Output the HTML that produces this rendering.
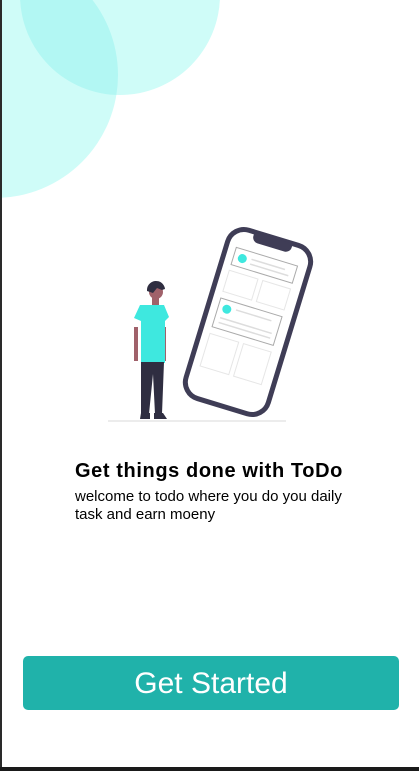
<!DOCTYPE html>
<html><head><style>
body{margin:0;width:419px;height:771px;overflow:hidden;background:#fff;position:relative;font-family:"Liberation Sans",Roboto,sans-serif}
.edge{position:absolute;left:0;top:0;width:2px;height:771px;background:#2a2a2a}
.bot{position:absolute;left:0;top:767px;width:419px;height:4px;background:#1a1a1a}
h1{position:absolute;left:75px;top:460px;margin:0;font-size:20px;letter-spacing:0.6px;font-weight:bold;color:#000}
p{position:absolute;left:75px;top:488px;margin:0;font-size:15px;line-height:18px;color:#000}
.btn{position:absolute;left:23px;top:656px;width:376px;height:54px;background:#20b2aa;border-radius:5px;color:#fff;font-size:30px;text-align:center;line-height:56px}
</style></head><body>
<svg width="419" height="771" style="position:absolute;left:0;top:0">
<circle cx="120" cy="-5" r="100" fill="#cffcf8"/>
<circle cx="-5" cy="75" r="123" fill="#cffcf8"/>
<clipPath id="c"><circle cx="120" cy="-5" r="100"/></clipPath>
<circle cx="-5" cy="75" r="123" fill="#b2f7f3" clip-path="url(#c)"/>
<line x1="108" y1="421" x2="286" y2="421" stroke="#e6e6e6" stroke-width="1.5"/>
<g transform="translate(248,322) rotate(17)">
<rect x="-43" y="-88" width="86" height="176" rx="17" fill="#fff" stroke="#3f3d56" stroke-width="5"/>
<path d="M-20,-88 h40 v4 a6,6 0 0 1 -6,6 h-28 a6,6 0 0 1 -6,-6z" fill="#3f3d56"/>
<rect x="-33" y="-68" width="64" height="18" fill="none" stroke="#aaa" stroke-width="1"/>
<circle cx="-24" cy="-59" r="4.5" fill="#3ee8df"/>
<line x1="-15" y1="-61" x2="20" y2="-61" stroke="#ddd" stroke-width="1.5"/>
<line x1="-15" y1="-56" x2="25" y2="-56" stroke="#ddd" stroke-width="1.5"/>
<rect x="-33" y="-44" width="30" height="22" fill="none" stroke="#e6e6e6"/>
<rect x="2" y="-44" width="29" height="22" fill="none" stroke="#e6e6e6"/>
<rect x="-33" y="-15" width="64" height="30" fill="none" stroke="#aaa" stroke-width="1"/>
<circle cx="-24" cy="-6" r="4.5" fill="#3ee8df"/>
<line x1="-15" y1="-8" x2="22" y2="-8" stroke="#ddd" stroke-width="1.5"/>
<line x1="-28" y1="4" x2="26" y2="4" stroke="#ddd" stroke-width="1.5"/>
<line x1="-28" y1="9" x2="26" y2="9" stroke="#ddd" stroke-width="1.5"/>
<rect x="-33" y="22" width="30" height="34" fill="none" stroke="#e6e6e6"/>
<rect x="2" y="22" width="29" height="34" fill="none" stroke="#e6e6e6"/>
</g>
<circle cx="156" cy="292" r="7" fill="#a0616a"/>
<path d="M147,291 a9,9 0 0 1 18,-2 l-3,1 l-5,-2 l-4,5z" fill="#2f2e41"/>
<rect x="152" y="297" width="7" height="8" fill="#a0616a"/>
<rect x="134" y="327" width="4" height="34" fill="#a0616a"/>
<rect x="162" y="327" width="4" height="34" fill="#a0616a"/>
<path d="M140,305 h24 l5,12 -4,4 v42 h-24 v-42 l-7,-3 z" fill="#3ee8df"/>
<path d="M141,362 h23 l-2,52 h-7 l-2,-40 -4,40 h-8z" fill="#2f2e41"/>
<path d="M141,413 h9 v6 h-10z M154,413 h9 l4,6 h-13z" fill="#2f2e41"/>
</svg>
<h1>Get things done with ToDo</h1>
<p>welcome to todo where you do you daily<br>task and earn moeny</p>
<div class="btn">Get Started</div>
<div class="edge"></div><div class="bot"></div>
</body></html>
